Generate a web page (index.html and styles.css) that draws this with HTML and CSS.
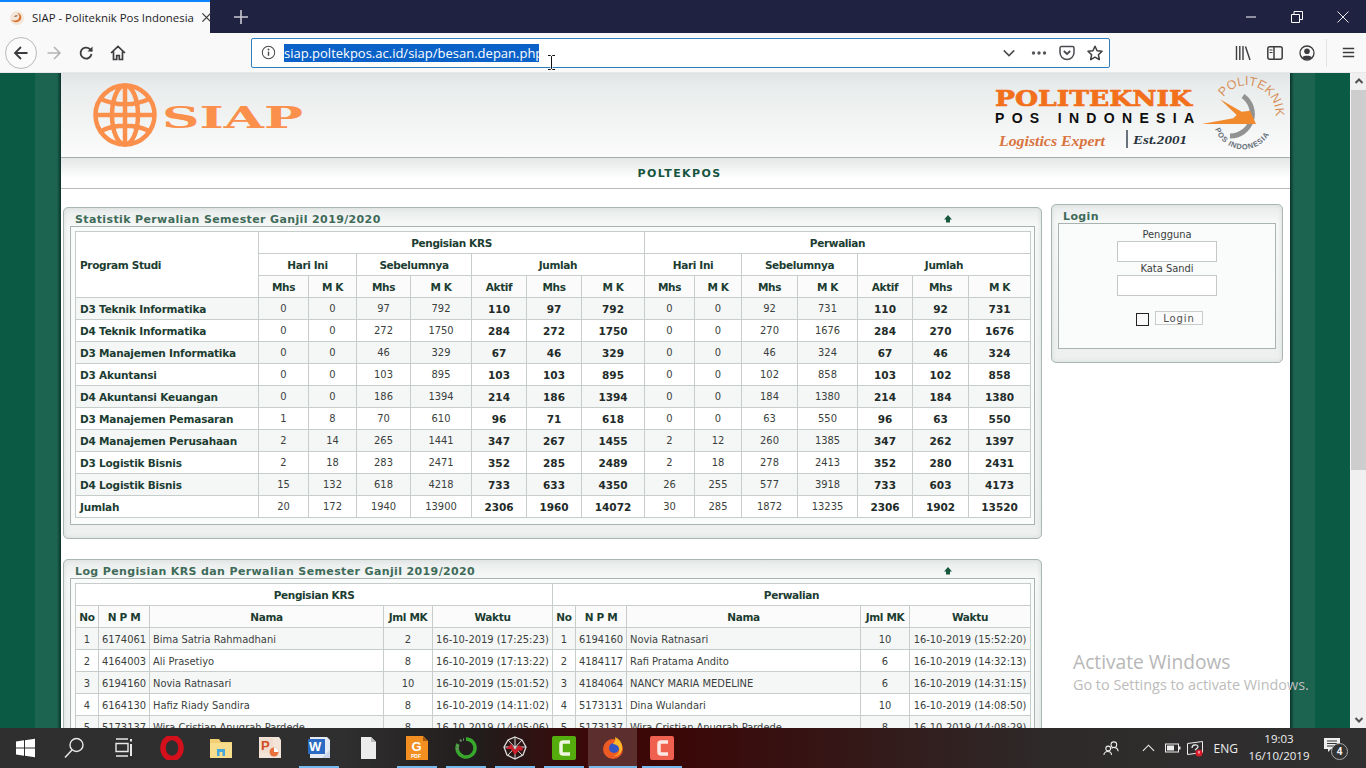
FILE: index.html
```html
<!DOCTYPE html>
<html lang="id">
<head>
<meta charset="utf-8">
<title>SIAP - Politeknik Pos Indonesia</title>
<link rel="stylesheet" href="styles.css">
</head>
<body>
<div class="tabstrip">
  <div class="tab">
    <svg class="favicon" viewBox="0 0 16 16"><circle cx="8" cy="8" r="7" fill="#f3e6d8"/><path d="M2 10c3 3 8 3 10-1 1-3-1-6-4-6 2 1 3 3 2 5-1 3-5 3-8 2z" fill="#d9702a"/><path d="M5 7c1-2 3-2 4-1-1 0-2 1-4 1z" fill="#8a5a3a"/></svg>
    <span class="tab-title">SIAP - Politeknik Pos Indonesia</span>
    <svg class="tab-close" viewBox="0 0 12 12"><path d="M1.500 1.500l9 9M10.500 1.500l-9 9" stroke="#3a3a3a" stroke-width="1.400"/></svg>
  </div>
  <svg class="tab-new" viewBox="0 0 14 14"><path d="M7 0v14M0 7h14" stroke="#c9cad2" stroke-width="1.600"/></svg>
  <div class="win-controls">
    <span class="win-btn"><svg viewBox="0 0 12 12"><path d="M1 6h10" stroke="#fff" stroke-width="1"/></svg></span>
    <span class="win-btn"><svg viewBox="0 0 12 12"><path d="M.5 3.500h8v8h-8zM3 3.500V.5h8.500v8H8.500" fill="none" stroke="#fff"/></svg></span>
    <span class="win-btn"><svg viewBox="0 0 12 12"><path d="M.5.5l11 11M11.500.5l-11 11" stroke="#fff" stroke-width=".9"/></svg></span>
  </div>
</div>
<div class="toolbar">
  <span class="nav-btn nav-back"><svg viewBox="0 0 16 16"><path d="M14.500 8H2M8 2L2 8l6 6" fill="none" stroke="#3c3c3f" stroke-width="1.800"/></svg></span>
  <span class="nav-btn"><svg viewBox="0 0 16 16"><path d="M1.500 8H14M8 2l6 6-6 6" fill="none" stroke="#b4b4b6" stroke-width="1.600"/></svg></span>
  <span class="nav-btn"><svg viewBox="0 0 16 16"><path d="M13.500 9A5.500 5.500 0 1 1 12 4.200L14 6" fill="none" stroke="#3c3c3f" stroke-width="1.800"/><path d="M14.500 1.500v5h-5z" fill="#3c3c3f"/></svg></span>
  <span class="nav-btn"><svg viewBox="0 0 16 16"><path d="M1 8l7-6.500L15 8M3.500 6.500V14.500h3.200v-4h2.600v4h3.200V6.500" fill="none" stroke="#3c3c3f" stroke-width="1.700"/></svg></span>
  <div class="urlbar">
    <svg class="url-info" viewBox="0 0 16 16"><circle cx="8" cy="8" r="6.600" fill="none" stroke="#4a4a4f" stroke-width="1.100"/><path d="M8 7v4.500" stroke="#4a4a4f" stroke-width="1.500"/><circle cx="8" cy="4.800" r="1" fill="#4a4a4f"/></svg>
    <span class="url-text">siap.poltekpos.ac.id/siap/besan.depan.php</span>
    <svg class="url-icon url-chevron" viewBox="0 0 16 16"><path d="M2 5l6 6 6-6" fill="none" stroke="#4a4a4f" stroke-width="1.700"/></svg>
    <svg class="url-icon url-dots" viewBox="0 0 16 16"><circle cx="2.500" cy="8" r="1.700" fill="#55555a"/><circle cx="8" cy="8" r="1.700" fill="#55555a"/><circle cx="13.500" cy="8" r="1.700" fill="#55555a"/></svg>
    <svg class="url-icon" viewBox="0 0 16 16"><path d="M2.500 1.500h11A1.500 1.500 0 0 1 15 3v4.500a7 7 0 0 1-14 0V3a1.500 1.500 0 0 1 1.500-1.500z" fill="none" stroke="#4a4a4f" stroke-width="1.500"/><path d="M4.800 6L8 9l3.200-3" fill="none" stroke="#4a4a4f" stroke-width="1.800"/></svg>
    <svg class="url-icon" viewBox="0 0 16 16"><path d="M8 1.200l2.100 4.500 4.900.6-3.600 3.400.9 4.900L8 12.200l-4.300 2.400.9-4.900L1 6.300l4.900-.6z" fill="none" stroke="#3c3c3f" stroke-width="1.500" stroke-linejoin="round"/></svg>
  </div>
  <div class="tools">
    <svg class="tool" viewBox="0 0 16 16"><path d="M1.500 1v14M4.800 1v14M8 1v14M10.500 1.500l4.500 13.500" stroke="#3c3c3f" stroke-width="1.400" fill="none"/></svg>
    <svg class="tool" viewBox="0 0 16 16"><rect x=".8" y="1.800" width="14.400" height="12.400" rx="2" fill="none" stroke="#3c3c3f" stroke-width="1.500"/><path d="M7 2v12" stroke="#3c3c3f" stroke-width="1.500"/><path d="M2.500 5h3M2.500 7.500h3" stroke="#3c3c3f"/></svg>
    <svg class="tool" viewBox="0 0 16 16"><circle cx="8" cy="8" r="7" fill="none" stroke="#3c3c3f" stroke-width="1.300"/><circle cx="8" cy="6.300" r="2.800" fill="#3c3c3f"/><path d="M3 12.500c1-2.500 9-2.500 10 0-2 2.500-8 2.500-10 0z" fill="#3c3c3f"/></svg>
    <span class="tool-sep"></span>
    <svg class="tool tool-menu" viewBox="0 0 16 16"><path d="M1 3h14M1 8h14M1 13h14" stroke="#3c3c3f" stroke-width="1.800"/></svg>
  </div>
</div>
<div class="viewport">
  <div class="stripe stripe-left"></div>
  <main class="content">
    <header class="banner">
      <svg class="logo-siap" viewBox="0 0 250 84">
        <g fill="none" stroke="#fb8f4c" stroke-width="4.500">
          <circle cx="45" cy="42" r="29.500"/>
          <ellipse cx="45" cy="42" rx="13" ry="29.500"/>
          <path d="M45 12v60M16 42h58M21 26c14 7 34 7 48 0M21 58c14-7 34-7 48 0"/>
        </g>
        <text class="siap-word" x="82" y="55" textLength="141" lengthAdjust="spacingAndGlyphs">SIAP</text>
      </svg>
      <svg class="logo-pos" viewBox="0 0 300 84">
        <text class="pos-main" x="6" y="33" textLength="197" lengthAdjust="spacingAndGlyphs">POLITEKNIK</text>
        <text class="pos-sub" x="6" y="50" textLength="199">POS INDONESIA</text>
        <text class="pos-motto" x="10" y="73" textLength="106" lengthAdjust="spacingAndGlyphs">Logistics Expert</text>
        <path d="M138 57v18" stroke="#3a4650" stroke-width="1.500"/>
        <text class="pos-est" x="144" y="71" textLength="54" lengthAdjust="spacingAndGlyphs">Est.2001</text>
        <defs>
          <path id="arc-top" d="M234.600 24.100A28 28 0 0 1 281 58"/>
          <path id="arc-bottom" d="M226 56A30 30 0 0 0 282 58"/>
        </defs>
        <path d="M254 23A22 22 0 0 1 241 63" fill="none" stroke="#929292" stroke-width="5"/>
        <path d="M231 26.300l21.700 12.400 8.300-1 6 13.300H212.700l31.600-5.700 3.400-3.300z" fill="#f08a2c"/>
        <text class="pos-arc"><textPath href="#arc-top" textLength="74">POLITEKNIK</textPath></text>
        <text class="pos-arc-b"><textPath href="#arc-bottom" textLength="68">POS INDONESIA</textPath></text>
      </svg>
    </header>
    <div class="sitebar">POLTEKPOS</div>
    <div class="columns">
      <div class="col-main">
        <section class="panel">
          <div class="panel-head"><h2 class="panel-title">Statistik Perwalian Semester Ganjil 2019/2020</h2><svg class="collapse" viewBox="0 0 8 8"><path d="M4 0l4 4.500H6V7.500H2V4.500H0z" fill="#17583f"/></svg></div>
          <div class="frame">
            <table class="grid">
              <colgroup><col class="c183"><col class="c50"><col class="c48"><col class="c54"><col class="c61"><col class="c55"><col class="c55"><col class="c63"><col class="c50"><col class="c47"><col class="c56"><col class="c60"><col class="c55"><col class="c56"><col class="c62"></colgroup>
              <thead>
                <tr><th rowspan="3" class="left">Program Studi</th><th colspan="7">Pengisian KRS</th><th colspan="7">Perwalian</th></tr>
                <tr><th colspan="2">Hari Ini</th><th colspan="2">Sebelumnya</th><th colspan="3">Jumlah</th><th colspan="2">Hari Ini</th><th colspan="2">Sebelumnya</th><th colspan="3">Jumlah</th></tr>
                <tr><th>Mhs</th><th>M K</th><th>Mhs</th><th>M K</th><th>Aktif</th><th>Mhs</th><th>M K</th><th>Mhs</th><th>M K</th><th>Mhs</th><th>M K</th><th>Aktif</th><th>Mhs</th><th>M K</th></tr>
              </thead>
              <tbody>
                <tr><th class="left">D3 Teknik Informatika</th><td>0</td><td>0</td><td>97</td><td>792</td><td class="b">110</td><td class="b">97</td><td class="b">792</td><td>0</td><td>0</td><td>92</td><td>731</td><td class="b">110</td><td class="b">92</td><td class="b">731</td></tr>
                <tr><th class="left">D4 Teknik Informatika</th><td>0</td><td>0</td><td>272</td><td>1750</td><td class="b">284</td><td class="b">272</td><td class="b">1750</td><td>0</td><td>0</td><td>270</td><td>1676</td><td class="b">284</td><td class="b">270</td><td class="b">1676</td></tr>
                <tr><th class="left">D3 Manajemen Informatika</th><td>0</td><td>0</td><td>46</td><td>329</td><td class="b">67</td><td class="b">46</td><td class="b">329</td><td>0</td><td>0</td><td>46</td><td>324</td><td class="b">67</td><td class="b">46</td><td class="b">324</td></tr>
                <tr><th class="left">D3 Akuntansi</th><td>0</td><td>0</td><td>103</td><td>895</td><td class="b">103</td><td class="b">103</td><td class="b">895</td><td>0</td><td>0</td><td>102</td><td>858</td><td class="b">103</td><td class="b">102</td><td class="b">858</td></tr>
                <tr><th class="left">D4 Akuntansi Keuangan</th><td>0</td><td>0</td><td>186</td><td>1394</td><td class="b">214</td><td class="b">186</td><td class="b">1394</td><td>0</td><td>0</td><td>184</td><td>1380</td><td class="b">214</td><td class="b">184</td><td class="b">1380</td></tr>
                <tr><th class="left">D3 Manajemen Pemasaran</th><td>1</td><td>8</td><td>70</td><td>610</td><td class="b">96</td><td class="b">71</td><td class="b">618</td><td>0</td><td>0</td><td>63</td><td>550</td><td class="b">96</td><td class="b">63</td><td class="b">550</td></tr>
                <tr><th class="left">D4 Manajemen Perusahaan</th><td>2</td><td>14</td><td>265</td><td>1441</td><td class="b">347</td><td class="b">267</td><td class="b">1455</td><td>2</td><td>12</td><td>260</td><td>1385</td><td class="b">347</td><td class="b">262</td><td class="b">1397</td></tr>
                <tr><th class="left">D3 Logistik Bisnis</th><td>2</td><td>18</td><td>283</td><td>2471</td><td class="b">352</td><td class="b">285</td><td class="b">2489</td><td>2</td><td>18</td><td>278</td><td>2413</td><td class="b">352</td><td class="b">280</td><td class="b">2431</td></tr>
                <tr><th class="left">D4 Logistik Bisnis</th><td>15</td><td>132</td><td>618</td><td>4218</td><td class="b">733</td><td class="b">633</td><td class="b">4350</td><td>26</td><td>255</td><td>577</td><td>3918</td><td class="b">733</td><td class="b">603</td><td class="b">4173</td></tr>
                <tr><th class="left">Jumlah</th><td>20</td><td>172</td><td>1940</td><td>13900</td><td class="b">2306</td><td class="b">1960</td><td class="b">14072</td><td>30</td><td>285</td><td>1872</td><td>13235</td><td class="b">2306</td><td class="b">1902</td><td class="b">13520</td></tr>
              </tbody>
            </table>
          </div>
        </section>
        <section class="panel panel-log">
          <div class="panel-head"><h2 class="panel-title">Log Pengisian KRS dan Perwalian Semester Ganjil 2019/2020</h2><svg class="collapse" viewBox="0 0 8 8"><path d="M4 0l4 4.500H6V7.500H2V4.500H0z" fill="#17583f"/></svg></div>
          <div class="frame">
            <table class="grid">
              <colgroup><col class="c23"><col class="c51"><col class="c234"><col class="c49"><col class="c120"><col class="c23"><col class="c51"><col class="c234"><col class="c49"><col class="c121"></colgroup>
              <thead>
                <tr><th colspan="5">Pengisian KRS</th><th colspan="5">Perwalian</th></tr>
                <tr><th>No</th><th>N P M</th><th>Nama</th><th>Jml MK</th><th>Waktu</th><th>No</th><th>N P M</th><th>Nama</th><th>Jml MK</th><th>Waktu</th></tr>
              </thead>
              <tbody>
                <tr><td>1</td><td>6174061</td><td class="name">Bima Satria Rahmadhani</td><td>2</td><td>16-10-2019 (17:25:23)</td><td>1</td><td>6194160</td><td class="name">Novia Ratnasari</td><td>10</td><td>16-10-2019 (15:52:20)</td></tr>
                <tr><td>2</td><td>4164003</td><td class="name">Ali Prasetiyo</td><td>8</td><td>16-10-2019 (17:13:22)</td><td>2</td><td>4184117</td><td class="name">Rafi Pratama Andito</td><td>6</td><td>16-10-2019 (14:32:13)</td></tr>
                <tr><td>3</td><td>6194160</td><td class="name">Novia Ratnasari</td><td>10</td><td>16-10-2019 (15:01:52)</td><td>3</td><td>4184064</td><td class="name">NANCY MARIA MEDELINE</td><td>6</td><td>16-10-2019 (14:31:15)</td></tr>
                <tr><td>4</td><td>6164130</td><td class="name">Hafiz Riady Sandira</td><td>8</td><td>16-10-2019 (14:11:02)</td><td>4</td><td>5173131</td><td class="name">Dina Wulandari</td><td>10</td><td>16-10-2019 (14:08:50)</td></tr>
                <tr><td>5</td><td>5173137</td><td class="name">Wira Cristian Anugrah Pardede</td><td>8</td><td>16-10-2019 (14:05:06)</td><td>5</td><td>5173137</td><td class="name">Wira Cristian Anugrah Pardede</td><td>8</td><td>16-10-2019 (14:08:29)</td></tr>
              </tbody>
            </table>
          </div>
        </section>
      </div>
      <aside class="col-side">
        <section class="panel panel-login">
          <div class="panel-head"><h2 class="panel-title">Login</h2></div>
          <div class="frame login-frame">
            <label class="login-label">Pengguna</label>
            <span class="login-input"></span>
            <label class="login-label">Kata Sandi</label>
            <span class="login-input"></span>
            <div class="login-row"><span class="login-check"></span><span class="login-btn">Login</span></div>
          </div>
        </section>
      </aside>
    </div>
  </main>
  <div class="stripe stripe-right"></div>
  <div class="scrollbar">
    <svg class="scroll-arrow" viewBox="0 0 16 17"><path d="M4.500 10L8 6.500l3.500 3.500" fill="none" stroke="#505050" stroke-width="2"/></svg>
    <div class="scroll-thumb"></div>
    <svg class="scroll-arrow scroll-down" viewBox="0 0 16 17"><path d="M4.500 7L8 10.500 11.500 7" fill="none" stroke="#505050" stroke-width="2"/></svg>
  </div>
  <div class="activate">
    <div class="activate-title">Activate Windows</div>
    <div class="activate-sub">Go to Settings to activate Windows.</div>
  </div>
</div>
<footer class="taskbar">
  <span class="task"><svg class="ti" viewBox="0 0 24 24"><path d="M3 5.500l8-1.200V11.500H3zM12 4.200l10-1.400V11.500H12zM3 12.500h8v7.200l-8-1.200zM12 12.500h10v8.700l-10-1.400z" fill="#fff"/></svg></span>
  <span class="task"><svg class="ti" viewBox="0 0 24 24"><circle cx="14.500" cy="9" r="6.500" fill="none" stroke="#e8e8e8" stroke-width="1.400"/><path d="M10 14L3 21.500" stroke="#e8e8e8" stroke-width="1.500"/></svg></span>
  <span class="task"><svg class="ti" viewBox="0 0 24 24"><path d="M5 3h12M5 7.500h12v8H5zM5 20h12" fill="none" stroke="#e8e8e8" stroke-width="1.400"/><path d="M20 3v2.500M20 8v12" stroke="#e8e8e8" stroke-width="2"/></svg></span>
  <span class="task"><svg class="ti" viewBox="0 0 24 24"><ellipse cx="12" cy="12" rx="9" ry="10.500" fill="none" stroke="#d5101c" stroke-width="5.500"/></svg></span>
  <span class="task"><svg class="ti" viewBox="0 0 24 24"><path d="M1 3h9l2 3h11v16H1z" fill="#f2cf72"/><path d="M1 7h22v15H1z" fill="#f7dd8c"/><path d="M8 13h8v7H8z" fill="#49a6d8"/><path d="M10.500 16h3v4h-3z" fill="#f7dd8c"/></svg></span>
  <span class="task"><svg class="ti" viewBox="0 0 24 24"><path d="M1 1h20l2 3v18H1z" fill="#f2e4d8"/><path d="M2 2h13v15H2z" fill="#f0ddcd"/><text class="ti-letter ti-p" x="3" y="14">P</text><circle cx="16" cy="16" r="4.500" fill="#e8713d"/><path d="M16 16v-4.500a4.500 4.500 0 0 1 4.500 4.500z" fill="#fff"/></svg></span>
  <span class="task on"><svg class="ti" viewBox="0 0 24 24"><path d="M3 1h17l3 3v18H3z" fill="#e5ebf5"/><path d="M1 3h17v15H1z" fill="#2a6ac2"/><text class="ti-letter" x="2" y="15">W</text><path d="M15 22l8-8v8z" fill="#c9d4e8"/></svg></span>
  <span class="task"><svg class="ti" viewBox="0 0 24 24"><path d="M5 1h10l5 5v17H5z" fill="#ececec"/><path d="M15 1v5h5z" fill="#bdbdbd"/></svg></span>
  <span class="task on"><svg class="ti" viewBox="0 0 24 24"><path d="M1 0h17l5 5v19H1z" fill="#f38e20"/><path d="M18 0v5h5z" fill="#a65a12"/><text class="ti-letter" x="6.500" y="15">G</text><text class="ti-pdf" x="6" y="22">PDF</text></svg></span>
  <span class="task on"><svg class="ti" viewBox="0 0 24 24"><path d="M12 3a9 9 0 1 1-8 5" fill="none" stroke="#38a82c" stroke-width="3.500"/><path d="M4 9a9 9 0 0 0 0 6M6 5l1.500-1M9 3.500l1 0" fill="none" stroke="#6d8d6a" stroke-width="2.500" stroke-dasharray="2 1"/></svg></span>
  <span class="task on"><svg class="ti" viewBox="0 0 24 24"><path d="M12 1l7 3 4 7-3 8-8 4-8-4-3-8 4-7z" fill="none" stroke="#ddd" stroke-width="1.300"/><path d="M12 1v22M1 11h22M5 4l14 15M19 4L5 19" stroke="#ddd" stroke-width="1"/><path d="M3 13l5-5 4 6 4-5 4 3-1 3-3-1-4 5-4-6z" fill="#cf1f2b"/></svg></span>
  <span class="task on"><svg class="ti" viewBox="0 0 24 24"><rect width="24" height="24" rx="2" fill="#54ad0c"/><path d="M18 6h-7a2 2 0 0 0-2 2v8a2 2 0 0 0 2 2h7" fill="none" stroke="#eef6df" stroke-width="3.500"/></svg></span>
  <span class="task on task-active"><svg class="ti" viewBox="0 0 24 24"><circle cx="12" cy="13" r="10" fill="#ee5a24"/><circle cx="13" cy="12" r="5" fill="#3456c4"/><path d="M14 1c6 3 8 8 7 13-2 5-6 7-8 6 4-1 6-4 5-8-1-3-4-4-6-4 1-2 3-3 2-7z" fill="#fcb824"/></svg></span>
  <span class="task on"><svg class="ti" viewBox="0 0 24 24"><rect width="24" height="24" rx="2" fill="#f0604f"/><path d="M18 6h-7a2 2 0 0 0-2 2v8a2 2 0 0 0 2 2h7" fill="none" stroke="#fde9e4" stroke-width="3.500"/></svg></span>
  <div class="tray">
    <svg class="tray-people" viewBox="0 0 18 18"><circle cx="11.500" cy="5" r="3" fill="none" stroke="#eee" stroke-width="1.100"/><circle cx="5.500" cy="9" r="2.500" fill="none" stroke="#eee" stroke-width="1.100"/><path d="M1 16c0-5 8-5 8 0M9 9c2-2 7-1 7 3" fill="none" stroke="#eee" stroke-width="1.100"/></svg>
    <svg class="tray-chev" viewBox="0 0 14 8"><path d="M1 7l6-6 6 6" fill="none" stroke="#eee" stroke-width="1.200"/></svg>
    <svg class="tray-batt" viewBox="0 0 16 10"><rect x=".5" y="1" width="13" height="8" fill="none" stroke="#eee"/><rect x="2" y="2.500" width="7" height="5" fill="#eee"/><rect x="14" y="3.500" width="1.500" height="3" fill="#eee"/></svg>
    <svg class="tray-net" viewBox="0 0 18 18"><path d="M1.500 4.500l15-2v11l-15 2z" fill="none" stroke="#eee"/><path d="M6 9c0-4 6-4 6-1-1 2-2 2-3 3" fill="none" stroke="#eee" stroke-width="1.200"/><circle cx="13" cy="14" r="3.500" fill="#d81c2c"/><path d="M13 12v2.500" stroke="#fff"/></svg>
    <span class="tray-lang">ENG</span>
    <div class="clock"><span>19:03</span><span>16/10/2019</span></div>
    <div class="notify">
      <svg class="notify-ic" viewBox="0 0 16 15"><path d="M0 0h16v11H7l-3 3v-3H0z" fill="#eee"/><path d="M3 3h10M3 5.500h10M3 8h7" stroke="#333"/></svg>
      <span class="notify-badge">4</span>
    </div>
  </div>
</footer>
<svg class="ibeam" viewBox="0 0 9 15"><path d="M1 .5h2.500l1 1 1-1H8M1 14.500h2.500l1-1 1 1H8M4.500 1.500v12" fill="none" stroke="#111"/><path d="M3.500 1.500v12M5.500 1.500v12" stroke="#fff" stroke-width=".5"/></svg>
</body>
</html>
```
FILE: styles.css
```css
* { box-sizing: border-box; }
html, body { margin: 0; padding: 0; width: 1366px; height: 768px; overflow: hidden; }
body { display: flex; flex-direction: column; position: relative; font-family: "DejaVu Sans", sans-serif; background: #fff; }

/* browser chrome */
.tabstrip { height: 33px; flex: none; background: #1f2240; display: flex; align-items: center; }
.tab { width: 210px; height: 33px; background: #f9f9fa; border-top: 2px solid #0a84ff; display: flex; align-items: center; padding-left: 9px; }
.favicon { width: 16px; height: 16px; flex: none; }
.tab-title { font: 11.400px "Open Sans", sans-serif; color: #1d1d1f; margin-left: 7px; white-space: nowrap; width: 163px; }
.tab-close { width: 11px; height: 11px; flex: none; margin-left: 7px; }
.tab-new { width: 14px; height: 14px; margin-left: 24px; }
.win-controls { margin-left: auto; display: flex; height: 33px; }
.win-btn { width: 46px; height: 33px; display: flex; align-items: center; justify-content: center; }
.win-btn svg { width: 12px; height: 12px; }
.toolbar { height: 40px; flex: none; background: #f9f9fa; display: flex; align-items: center; padding-left: 5px; border-bottom: 1px solid #e8e8ea; }
.nav-btn { width: 32px; height: 32px; display: flex; align-items: center; justify-content: center; flex: none; }
.nav-btn svg { width: 16px; height: 16px; }
.nav-back { border: 1px solid #b9b9bb; border-radius: 50%; background: #fbfbfb; margin-right: 1px; }
.urlbar { width: 859px; height: 30px; margin-left: 117px; background: #fff; border: 1px solid #2f7fbf; border-radius: 2px; display: flex; align-items: center; padding-left: 9px; flex: none; }
.url-info { width: 15px; height: 15px; flex: none; }
.url-text { font: 13px "Open Sans", sans-serif; color: #fff; background: #0a62c9; margin: 1px 0 0 8px; height: 18px; line-height: 18px; white-space: nowrap; width: 255px; flex: none; }
.url-icon { width: 16px; height: 16px; flex: none; margin-left: 12px; }
.url-chevron { margin-left: 463px; width: 14px; height: 14px; }
.url-dots { margin-left: 15px; }
.tools { display: flex; align-items: center; margin-left: 125px; }
.tool { width: 16px; height: 16px; flex: none; margin-right: 16px; }
.tool-sep { width: 1px; height: 28px; background: #e3e3e5; margin-left: -5px; margin-right: 15px; }
.tool-menu { width: 13px; height: 13px; }

/* page viewport */
.viewport { height: 655px; flex: none; display: flex; position: relative; overflow: hidden; }
.stripe { width: 61px; flex: none; }
.stripe-left { background: linear-gradient(90deg, #0b5a43 0 35px, #1c6350 35px 57px, #0a3328 61px); }
.stripe-right { width: 60px; background: linear-gradient(90deg, #0a3328 0, #1c6350 4px 25px, #0b5a43 25px); }
.content { width: 1229px; flex: none; background: #fff; overflow: hidden; }
.banner { height: 85px; background: linear-gradient(180deg, #dfe3e3 0, #e9ecec 12px, #fbfbfb 100%); border-bottom: 1px solid #a9adab; display: flex; justify-content: space-between; }
.logo-siap { width: 250px; height: 84px; margin-left: 19px; }
.siap-word { font: 700 30px "DejaVu Serif", serif; fill: #fb8f4c; }
.logo-pos { width: 300px; height: 84px; margin-right: 1px; }
.pos-main { font: 700 23px "DejaVu Serif", serif; fill: #f2701c; stroke: #f2701c; stroke-width: .7px; }
.pos-sub { font: 700 14px "Liberation Sans", sans-serif; fill: #0d0d0d; }
.pos-motto { font: italic 700 15px "Liberation Serif", serif; fill: #d9743f; }
.pos-est { font: italic 700 13px "Liberation Serif", serif; fill: #27313a; }
.pos-arc { font: 12.500px "Liberation Sans", sans-serif; fill: #d6915b; }
.pos-arc-b { font: 700 7.500px "Liberation Sans", sans-serif; fill: #67707a; }
.sitebar { height: 31px; background: linear-gradient(180deg, #e4e7e7 0, #fff 70%); border-bottom: 1px solid #b3bab7; display: flex; align-items: center; justify-content: center; font-size: 11px; font-weight: 700; letter-spacing: 1.400px; color: #17553f; padding-left: 8px; padding-top: 1px; }
.columns { display: flex; align-items: flex-start; padding: 15px 0 0 2px; }
.col-main { width: 979px; flex: none; margin-top: 3px; }
.col-side { width: 232px; flex: none; margin-left: 9px; }

.panel { border: 1px solid #a9b7b1; border-radius: 5px; background: linear-gradient(180deg, #e9ecec 0, #f7f8f8 18px, #eef0f0 100%); box-shadow: inset 0 0 5px #d4dad8; padding: 0 6px 13px; }
.panel-log { margin-top: 20px; }
.panel-head { height: 18px; display: flex; align-items: center; padding: 5px 0 0 5px; }
.panel-title { margin: 0; font-size: 11px; font-weight: 700; letter-spacing: .37px; color: #3f6b59; line-height: 14px; white-space: nowrap; }
.collapse { width: 8px; height: 8px; margin: -2px 83px 0 auto; }
.frame { border: 1px solid #a9b3af; padding: 4px 5px 6px 4px; background: #fafbfb; }

.grid { border-collapse: collapse; table-layout: fixed; width: 955px; font-size: 11px; font-stretch: condensed; color: #3a3f3d; background: #fff; }
.grid th, .grid td { border: 1px solid #c6cdca; height: 22px; padding: 0; text-align: center; white-space: nowrap; overflow: hidden; }
.grid th { font-weight: 700; font-stretch: normal; font-size: 10.500px; color: #1c3d31; background: #fff; }
.grid thead th { letter-spacing: -.35px; }
.grid tbody th { letter-spacing: -.2px; }
.grid th.left { text-align: left; padding-left: 4px; }
.grid thead tr:last-child th { background: #fbfbfb; }
.grid tbody tr:nth-child(odd) td, .grid tbody tr:nth-child(odd) th { background: #f5f6f6; }
.grid td.b { font-weight: 700; font-stretch: normal; font-size: 10.500px; color: #222b28; }
.panel-log .grid tbody td { padding-top: 2px; }
.grid td.name { text-align: left; padding-left: 3px; }
.c23 { width: 23px; } .c47 { width: 47px; } .c48 { width: 48px; } .c49 { width: 49px; } .c50 { width: 50px; }
.c51 { width: 51px; } .c54 { width: 54px; } .c55 { width: 55px; } .c56 { width: 56px; } .c60 { width: 60px; }
.c61 { width: 61px; } .c62 { width: 62px; } .c63 { width: 63px; } .c120 { width: 120px; } .c121 { width: 121px; }
.c183 { width: 183px; } .c234 { width: 234px; }

/* login */
.panel-login { height: 159px; padding-bottom: 0; }
.login-frame { height: 126px; display: flex; flex-direction: column; align-items: center; padding: 4px 0 0; }
.login-label { font-size: 11px; font-stretch: condensed; color: #3a3f3d; line-height: 12px; height: 13px; padding-top: 1px; }
.login-input { width: 100px; height: 21px; border: 1px solid #c4c8c7; background: #fff; flex: none; }
.login-row { display: flex; align-items: flex-start; gap: 6px; margin-top: 15px; padding-left: 5px; }
.login-check { width: 13px; height: 13px; border: 1px solid #222; background: #fafafa; margin-top: 2px; }
.login-btn { width: 48px; height: 14px; border: 1px solid #c8cccb; background: #fbfbfb; font-size: 10px; letter-spacing: .9px; color: #4a4f4d; display: flex; align-items: center; justify-content: center; }

/* scrollbar */
.scrollbar { width: 16px; flex: none; background: #f0f0f0; display: flex; flex-direction: column; border-left: 1px solid #f4f4f4; }
.scroll-arrow { width: 16px; height: 17px; flex: none; }
.scroll-thumb { height: 380px; background: #cdcdcd; }
.scroll-down { margin-top: auto; }

/* activate overlay */
.activate { position: absolute; left: 1073px; top: 577px; color: #b7b7b7; font-family: "Open Sans", sans-serif; white-space: nowrap; }
.activate-title { font-size: 19.200px; line-height: 23px; }
.activate-sub { font-size: 14.400px; line-height: 22px; margin-top: 1px; color: #bcbcbc; }

/* taskbar */
.taskbar { height: 40px; flex: none; display: flex; align-items: center; background: linear-gradient(90deg, #2f2f2f 0, #2f2f2f 340px, #221c1c 480px, #3f0606 600px, #3a0808 690px, #2e2a2a 1050px, #303030 100%); }
.task { width: 49px; height: 40px; display: flex; align-items: center; justify-content: center; position: relative; flex: none; }
.task.on::after { content: ""; position: absolute; left: 5px; right: 4px; bottom: 0; height: 2px; background: #76b9ed; }
.task-active { background: rgba(255,255,255,.16); }
.task-active.on::after { left: 1px; right: 0; }
.ti { width: 24px; height: 24px; }
.ti-letter { font: 700 13px "Liberation Sans", sans-serif; fill: #fff; }
.ti-p { fill: #d04a22; }
.ti-pdf { font: 700 5px "Liberation Sans", sans-serif; fill: #fff; }
.tray { margin-left: auto; display: flex; align-items: center; height: 40px; color: #eee; padding-right: 18px; }
.tray-people { width: 17px; height: 17px; margin-right: 22px; }
.tray-chev { width: 13px; height: 8px; margin-right: 10px; }
.tray-batt { width: 16px; height: 10px; margin-right: 5px; }
.tray-net { width: 18px; height: 18px; margin-right: 10px; }
.tray-lang { font: 12px "Open Sans", sans-serif; margin-right: 9px; }
.clock { display: flex; flex-direction: column; align-items: center; font: 11.500px/17px "Open Sans", sans-serif; margin: -2px 13px 0 0; width: 64px; }
.notify { position: relative; width: 24px; height: 24px; }
.notify-ic { width: 16px; height: 15px; position: absolute; left: 0; top: 2px; }
.notify-badge { position: absolute; left: 7px; top: 7px; width: 17px; height: 17px; border: 1px solid #aaa; border-radius: 50%; background: #333; font: 700 10px/15px "Open Sans", sans-serif; text-align: center; color: #eee; }

.ibeam { position: absolute; left: 547px; top: 55px; width: 9px; height: 15px; }
```
